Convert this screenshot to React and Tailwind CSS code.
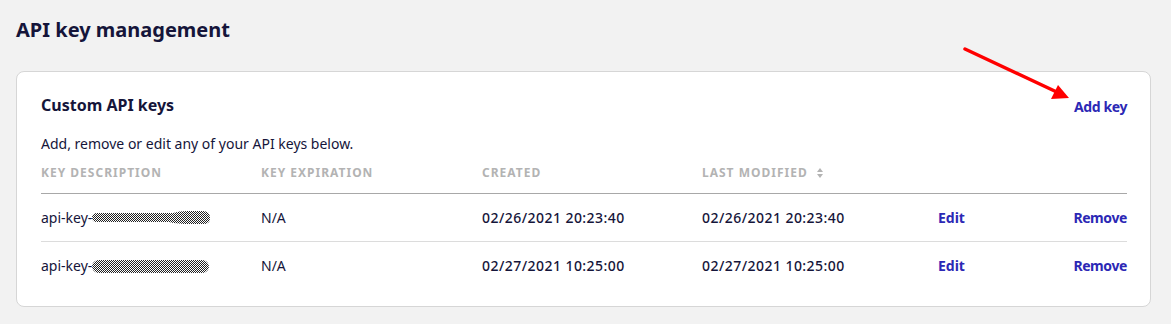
import React from "react";

const rows = [
  { created: "02/26/2021 20:23:40", modified: "02/26/2021 20:23:40", bulge: true },
  { created: "02/27/2021 10:25:00", modified: "02/27/2021 10:25:00", bulge: false },
];

const Redacted = ({ bulge, id }) => (
  <svg width="120" height="16" viewBox="0 0 120 16" className="block">
    <defs>
      <pattern id={id} width="2" height="2" patternUnits="userSpaceOnUse">
        <rect width="2" height="2" fill="#ffffff" />
        <rect width="1" height="1" fill="#222222" />
        <rect x="1" y="1" width="1" height="1" fill="#222222" />
      </pattern>
    </defs>
    {bulge ? (
      <path
        d="M6 4 Q1 4 1 8.5 Q1 13 6 13 L78 13 Q86 15 100 15 L113 15 Q119 15 119 9 Q119 2 112 2 L96 2 Q88 2 82 4 Z"
        fill={`url(#${id})`}
      />
    ) : (
      <rect x="1" y="2" width="117" height="13" rx="6.5" fill={`url(#${id})`} />
    )}
  </svg>
);

const SortIcon = () => (
  <svg width="8" height="12" viewBox="0 0 8 12" className="ml-[8px]">
    <path d="M4 1 L7 5 L1 5 Z" fill="#b3b3b3" />
    <path d="M4 11 L7 7 L1 7 Z" fill="#b3b3b3" />
  </svg>
);

export default function App() {
  return (
    <div
      className="min-h-[324px] bg-[#f2f2f2] px-4 pt-[18px] text-[#15153a]"
      style={{ fontFamily: '"Noto Sans", "Liberation Sans", sans-serif' }}
    >
      <h1 className="text-[20px] font-bold leading-[24px]">API key management</h1>

      <div className="relative mt-[29px] w-[1135px] rounded-lg border border-[#d6d6d6] bg-white pb-[16px] pl-[24px] pr-[23px] pt-[22px]">
        <svg
          width="120"
          height="60"
          viewBox="0 0 120 60"
          className="pointer-events-none absolute left-[940px] top-[-26px]"
        >
          <line x1="8" y1="3" x2="104" y2="48" stroke="#ff0000" strokeWidth="3.5" strokeLinecap="round" />
          <path d="M112 52 L94 53 L101 39 Z" fill="#ff0000" />
        </svg>

        <div className="flex items-end justify-between">
          <h2 className="text-[16px] font-bold leading-[22px]">Custom API keys</h2>
          <a className="mb-[-1px] text-[14px] font-bold tracking-[-0.4px] text-[#2c28b5]">Add key</a>
        </div>

        <p className="mt-[18px] text-[14px] leading-[20px]">Add, remove or edit any of your API keys below.</p>

        <div className="mt-[11px] flex items-center border-b border-[#a8a8a8] pb-[12px] text-[12px] font-bold uppercase leading-[16px] tracking-[1px] text-[#b3b3b3]">
          <div className="w-[220px]">Key description</div>
          <div className="w-[221px]">Key expiration</div>
          <div className="w-[220px]">Created</div>
          <div className="flex w-[220px] items-center">
            Last modified
            <SortIcon />
          </div>
        </div>

        {rows.map((r, i) => (
          <div
            key={i}
            className={`flex h-[48px] items-center pb-[1px] text-[14px] ${i === 0 ? "border-b border-[#dcdcdc]" : ""}`}
          >
            <div className="flex w-[220px] items-center">
              api-key-
              <span className="-ml-[1px]">
                <Redacted bulge={r.bulge} id={`redact-${i}`} />
              </span>
            </div>
            <div className="w-[221px]">N/A</div>
            <div className="w-[220px] font-medium tracking-[0.45px]">{r.created}</div>
            <div className="w-[220px] font-medium tracking-[0.45px]">{r.modified}</div>
            <div className="w-[135px] pl-[16px] font-bold text-[#2c28b5]">Edit</div>
            <div className="flex-1 text-right font-bold tracking-[-0.4px] text-[#2c28b5]">Remove</div>
          </div>
        ))}
      </div>
    </div>
  );
}
